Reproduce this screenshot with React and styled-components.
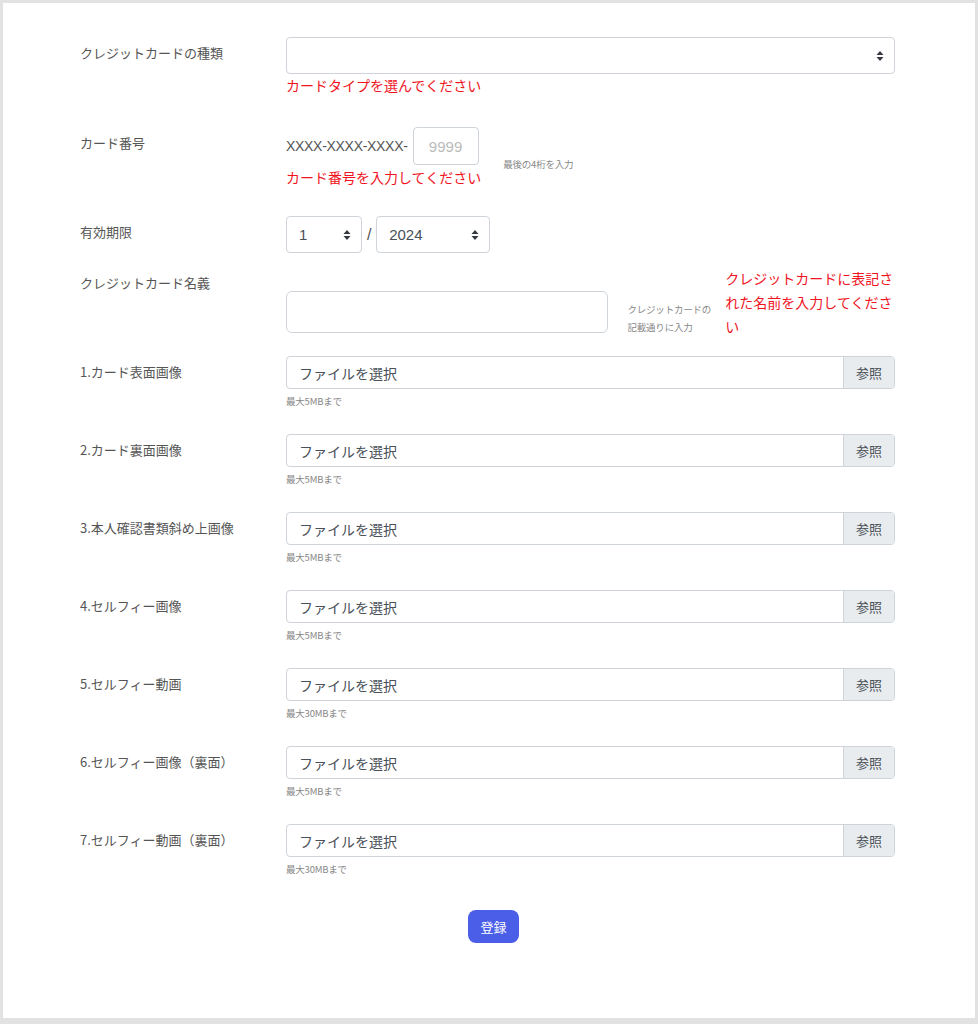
import React from "react";
import styled, { createGlobalStyle } from "styled-components";

const Global = createGlobalStyle`
  html, body { margin: 0; padding: 0; background: #e2e2e2; }
  body { font-family: "Noto Sans CJK JP", "Liberation Sans", sans-serif; color: #495057; }
`;

const Page = styled.div`
  margin: 3px;
  background: #fff;
  min-height: 1015px;
  box-sizing: border-box;
  padding: 34px 80px 0 77px;
`;

const Row = styled.div`
  display: flex;
  align-items: flex-start;
  margin-bottom: ${(p) => p.mb || 0}px;
`;

const Label = styled.div`
  width: 206px;
  flex: none;
  font-size: 13px;
  color: #555;
  padding-top: ${(p) => p.pt ?? 7}px;
  line-height: 18px;
`;

const Field = styled.div`
  flex: 1;
  min-width: 0;
`;

const ctrl = `
  box-sizing: border-box;
  border: 1px solid #ced4da;
  border-radius: 4px;
  background: #fff;
  font-family: "Liberation Sans", "Noto Sans CJK JP", sans-serif;
  font-size: 15px;
  color: #495057;
`;

const Select = styled.div`
  ${ctrl}
  width: ${(p) => p.w || "100%"};
  height: 37px;
  display: flex;
  align-items: center;
  justify-content: space-between;
  padding: 0 10px 0 12px;
`;

const Arrows = () => (
  <svg width="8" height="12" viewBox="0 0 8 12">
    <path d="M4 1 L7.5 5 H0.5 Z M4 11 L7.5 7 H0.5 Z" fill="#343a40" />
  </svg>
);

const Error = styled.div`
  color: #f0141e;
  font-size: 14px;
  line-height: 24px;
  margin-top: ${(p) => p.mt || 0}px;
  width: ${(p) => p.w || "auto"};
`;

const Hint = styled.div`
  font-size: 9.5px;
  color: #888;
  line-height: ${(p) => p.lh || 14}px;
  margin-top: ${(p) => p.mt || 0}px;
  width: ${(p) => p.w || "auto"};
  letter-spacing: -0.2px;
`;

const Inline = styled.div`
  display: flex;
  align-items: ${(p) => p.align || "center"};
  gap: ${(p) => p.gap || 0}px;
`;

const Prefix = styled.span`
  font-family: "Liberation Sans", sans-serif;
  font-size: 14px;
  color: #555;
  letter-spacing: -0.3px;
  margin-right: 5px;
`;

const Input = styled.div`
  ${ctrl}
  width: ${(p) => p.w};
  height: ${(p) => p.h}px;
  display: flex;
  align-items: center;
  justify-content: center;
  color: #bbb;
  border-radius: ${(p) => p.r || 4}px;
`;

const File = styled.div`
  ${ctrl}
  height: 33px;
  display: flex;
  overflow: hidden;
  font-family: "Noto Sans CJK JP", sans-serif;
  font-size: 14px;
`;

const FileText = styled.div`
  flex: 1;
  padding: 0 12px;
  display: flex;
  align-items: center;
`;

const Browse = styled.div`
  width: 50px;
  background: #e9ecef;
  border-left: 1px solid #ced4da;
  display: flex;
  align-items: center;
  justify-content: center;
  font-size: 13px;
`;

const Footer = styled.div`
  display: flex;
  justify-content: center;
  padding: 8px 0 0 12px;
`;

const Button = styled.button`
  background: #4a5ee8;
  color: #fff;
  border: none;
  border-radius: 8px;
  width: 51px;
  height: 33px;
  font-family: "Noto Sans CJK JP", sans-serif;
  font-size: 13px;
`;

const files = [
  ["1.カード表面画像", "最大5MBまで"],
  ["2.カード裏面画像", "最大5MBまで"],
  ["3.本人確認書類斜め上画像", "最大5MBまで"],
  ["4.セルフィー画像", "最大5MBまで"],
  ["5.セルフィー動画", "最大30MBまで"],
  ["6.セルフィー画像（裏面）", "最大5MBまで"],
  ["7.セルフィー動画（裏面）", "最大30MBまで"],
];

export default function App() {
  return (
    <>
      <Global />
      <Page>
        <Row mb={30}>
          <Label>クレジットカードの種類</Label>
          <Field>
            <Select><span /><Arrows /></Select>
            <Error mt={-1}>カードタイプを選んでください</Error>
          </Field>
        </Row>
        <Row mb={27}>
          <Label>カード番号</Label>
          <Field>
            <Inline align="flex-start">
              <div>
                <Inline>
                  <Prefix>XXXX-XXXX-XXXX-</Prefix>
                  <Input w="66px" h={38}>9999</Input>
                </Inline>
                <Error>カード番号を入力してください</Error>
              </div>
              <Hint mt={30} style={{ marginLeft: 22 }}>最後の4桁を入力</Hint>
            </Inline>
          </Field>
        </Row>
        <Row mb={15}>
          <Label>有効期限</Label>
          <Field>
            <Inline gap={5}>
              <Select w="76px">1<Arrows /></Select>
              <Prefix style={{ fontSize: 16, margin: 0 }}>/</Prefix>
              <Select w="114px">2024<Arrows /></Select>
            </Inline>
          </Field>
        </Row>
        <Row mb={18}>
          <Label pt={6}>クレジットカード名義</Label>
          <Field>
            <Inline align="flex-start">
              <Input w="323px" h={42} r={6} style={{ marginTop: 23 }} />
              <Hint w="84px" lh={18} mt={32} style={{ marginLeft: 19 }}>
                クレジットカードの記載通りに入力
              </Hint>
              <Error w="170px" style={{ marginLeft: 14, marginTop: -2 }}>
                クレジットカードに表記された名前を入力してください
              </Error>
            </Inline>
          </Field>
        </Row>
        {files.map(([l, h]) => (
          <Row key={l} mb={26}>
            <Label>{l}</Label>
            <Field>
              <File>
                <FileText>ファイルを選択</FileText>
                <Browse>参照</Browse>
              </File>
              <Hint mt={5}>{h}</Hint>
            </Field>
          </Row>
        ))}
        <Footer><Button>登録</Button></Footer>
      </Page>
    </>
  );
}
